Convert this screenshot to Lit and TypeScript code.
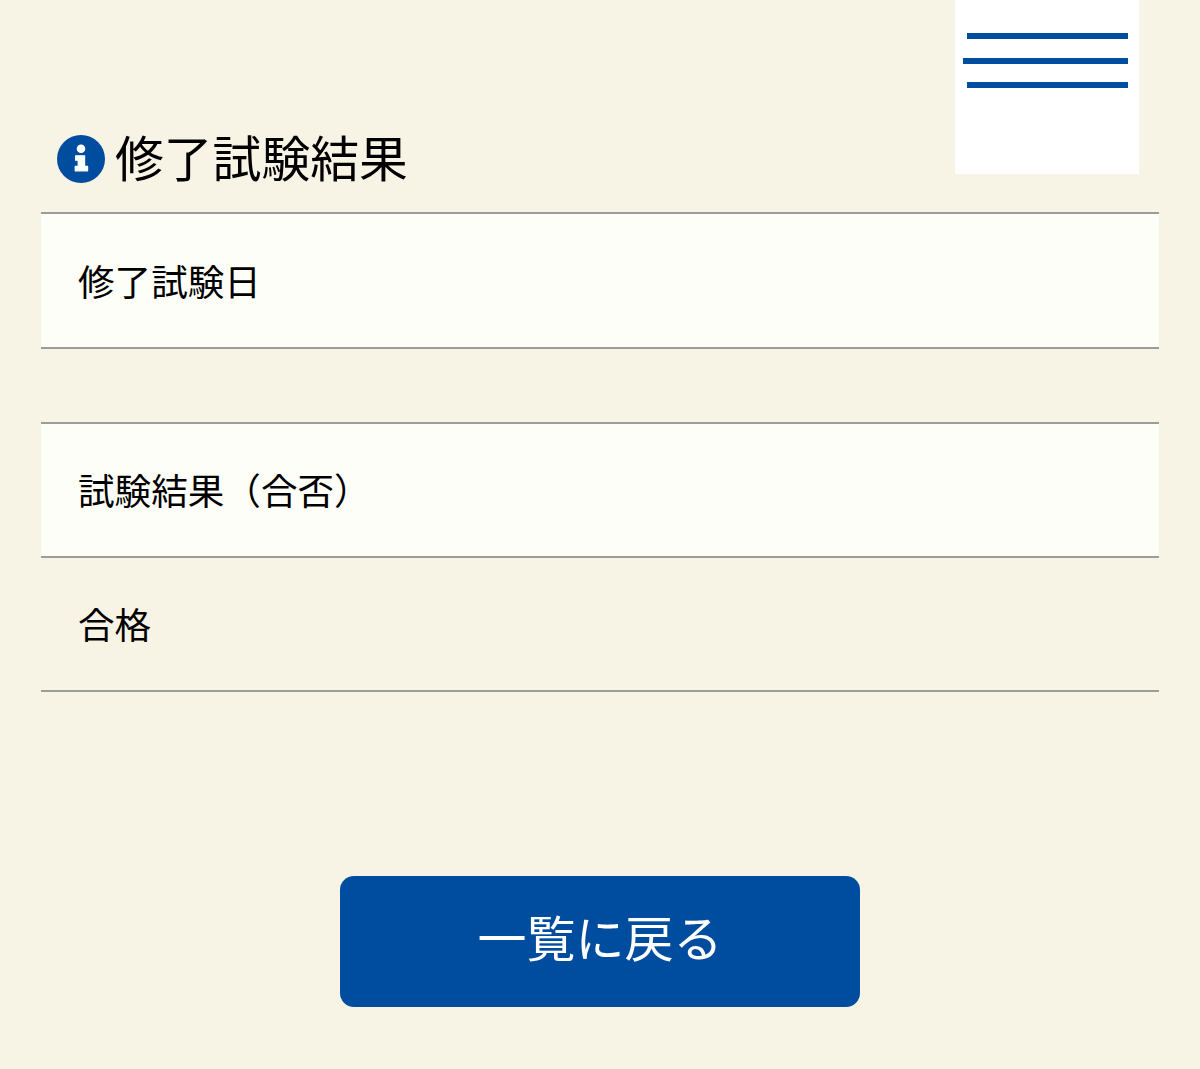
import { LitElement, html, css } from "lit";
import { customElement } from "lit/decorators.js";

@customElement("app-root")
export class AppRoot extends LitElement {
  static styles = css`
    :host {
      display: block;
      position: relative;
      height: 1069px;
      overflow: hidden;
      background: #f7f4e6;
      color: #000;
      font-family: "Noto Sans CJK JP", "Liberation Sans", sans-serif;
    }
    .page {
      display: flex;
      flex-direction: column;
      padding: 122px 41px 0;
    }
    .menu {
      position: absolute;
      top: 0;
      left: 955px;
      width: 184px;
      height: 174px;
      background: #fff;
      display: flex;
      flex-direction: column;
      align-items: flex-end;
      gap: 18.5px;
      padding: 33px 11px 0 0;
      box-sizing: border-box;
    }
    .bar {
      width: 161px;
      height: 6px;
      background: #004da0;
    }
    .bar.long {
      width: 165px;
    }
    .heading {
      display: flex;
      align-items: center;
      gap: 10px;
      height: 74px;
      padding: 0 0 16px 16px;
      margin: 0;
      font-size: 48.8px;
      font-weight: 400;
      line-height: 72px;
    }
    .heading svg {
      width: 48px;
      height: 48px;
      flex: none;
    }
    .heading span {
      margin-bottom: 6px;
    }
    .row {
      display: flex;
      align-items: center;
      height: 132px;
      padding-left: 37px;
      font-size: 36.6px;
      line-height: 54px;
      border-bottom: 2px solid #9c9c98;
    }
    .row.first {
      border-top: 2px solid #9c9c98;
    }
    .row.head {
      background: #fefef9;
    }
    .row.tall {
      height: 133px;
    }
    .spaced {
      margin-top: 73px;
    }
    .actions {
      display: flex;
      justify-content: center;
      margin-top: 184px;
    }
    .back {
      width: 520px;
      height: 131px;
      padding: 0 0 12px;
      border: 0;
      border-radius: 14px;
      background: #004da0;
      color: #fff;
      font: inherit;
      font-size: 49px;
    }
  `;

  render() {
    return html`
      <div class="page">
        <h1 class="heading">
          <svg viewBox="0 0 48 48" aria-hidden="true">
            <circle cx="24" cy="24" r="24" fill="#004da0"></circle>
            <circle cx="24" cy="13.8" r="4.3" fill="#fff"></circle>
            <path
              fill="#fff"
              stroke="#fff"
              stroke-width="1.2"
              stroke-linejoin="round"
              d="M18.6 20.8h9v10.6h3v4.4H18.2v-4.4h3v-6.2h-2.6z"
            ></path>
          </svg>
          <span>修了試験結果</span>
        </h1>
        <div class="row head first tall">修了試験日</div>
        <div class="row head first spaced">試験結果（合否）</div>
        <div class="row">合格</div>
        <div class="actions"><button class="back">一覧に戻る</button></div>
      </div>
      <div class="menu">
        <div class="bar"></div>
        <div class="bar long"></div>
        <div class="bar"></div>
      </div>
    `;
  }
}
